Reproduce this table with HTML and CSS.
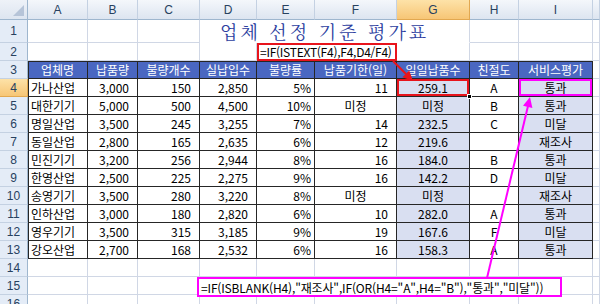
FILE: index.html
```html
<!DOCTYPE html>
<html lang="ko">
<head>
<meta charset="utf-8">
<title>업체 선정 기준 평가표</title>
<link rel="stylesheet" href="styles.css">
</head>
<body>
<div class="sheet">
  <div class="corner"><span class="tri"></span></div>
  <div class="ch">A</div><div class="ch">B</div><div class="ch">C</div><div class="ch">D</div><div class="ch">E</div><div class="ch">F</div><div class="ch sel">G</div><div class="ch">H</div><div class="ch">I</div><div class="ch"></div>

  <div class="rh">1</div><div class="c"></div><div class="c"></div><div class="c"></div><div class="c title">업체 선정 기준 평가표</div><div class="c"></div><div class="c"></div><div class="c"></div>

  <div class="rh">2</div><div class="c"></div><div class="c"></div><div class="c"></div><div class="c"></div><div class="c formula">=IF(ISTEXT(F4),F4,D4/F4)</div><div class="c"></div><div class="c"></div><div class="c"></div><div class="c"></div>

  <div class="rh">3</div><div class="c t hd a">업체명</div><div class="c t hd">납품량</div><div class="c t hd">불량개수</div><div class="c t hd">실납입수</div><div class="c t hd">불량률</div><div class="c t hd">납품기한(일)</div><div class="c t hd">일일납품수</div><div class="c t hd">친절도</div><div class="c t hd">서비스평가</div><div class="c"></div>

  <div class="rh sel">4</div><div class="c t a">가나산업</div><div class="c t r">3,000</div><div class="c t r">150</div><div class="c t r">2,850</div><div class="c t p">5%</div><div class="c t r">11</div><div class="c t m g redbox">259.1<span class="handle"></span></div><div class="c t m">A</div><div class="c t m g pinkbox">통과</div><div class="c"></div>

  <div class="rh">5</div><div class="c t a">대한기기</div><div class="c t r">5,000</div><div class="c t r">500</div><div class="c t r">4,500</div><div class="c t p">10%</div><div class="c t m">미정</div><div class="c t m g">미정</div><div class="c t m">B</div><div class="c t m g">통과</div><div class="c"></div>

  <div class="rh">6</div><div class="c t a">명일산업</div><div class="c t r">3,500</div><div class="c t r">245</div><div class="c t r">3,255</div><div class="c t p">7%</div><div class="c t r">14</div><div class="c t m g">232.5</div><div class="c t m">C</div><div class="c t m g">미달</div><div class="c"></div>

  <div class="rh">7</div><div class="c t a">동일산업</div><div class="c t r">2,800</div><div class="c t r">165</div><div class="c t r">2,635</div><div class="c t p">6%</div><div class="c t r">12</div><div class="c t m g">219.6</div><div class="c t m"></div><div class="c t m g">재조사</div><div class="c"></div>

  <div class="rh">8</div><div class="c t a">민진기기</div><div class="c t r">3,200</div><div class="c t r">256</div><div class="c t r">2,944</div><div class="c t p">8%</div><div class="c t r">16</div><div class="c t m g">184.0</div><div class="c t m">B</div><div class="c t m g">통과</div><div class="c"></div>

  <div class="rh">9</div><div class="c t a">한영산업</div><div class="c t r">2,500</div><div class="c t r">225</div><div class="c t r">2,275</div><div class="c t p">9%</div><div class="c t r">16</div><div class="c t m g">142.2</div><div class="c t m">D</div><div class="c t m g">미달</div><div class="c"></div>

  <div class="rh">10</div><div class="c t a">송영기기</div><div class="c t r">3,500</div><div class="c t r">280</div><div class="c t r">3,220</div><div class="c t p">8%</div><div class="c t m">미정</div><div class="c t m g">미정</div><div class="c t m"></div><div class="c t m g">재조사</div><div class="c"></div>

  <div class="rh">11</div><div class="c t a">인하산업</div><div class="c t r">3,000</div><div class="c t r">180</div><div class="c t r">2,820</div><div class="c t p">6%</div><div class="c t r">10</div><div class="c t m g">282.0</div><div class="c t m">A</div><div class="c t m g">통과</div><div class="c"></div>

  <div class="rh">12</div><div class="c t a">영우기기</div><div class="c t r">3,500</div><div class="c t r">315</div><div class="c t r">3,185</div><div class="c t p">9%</div><div class="c t r">19</div><div class="c t m g">167.6</div><div class="c t m">F</div><div class="c t m g">미달</div><div class="c"></div>

  <div class="rh">13</div><div class="c t a">강오산업</div><div class="c t r">2,700</div><div class="c t r">168</div><div class="c t r">2,532</div><div class="c t p">6%</div><div class="c t r">16</div><div class="c t m g">158.3</div><div class="c t m">A</div><div class="c t m g">통과</div><div class="c"></div>

  <div class="rh">14</div><div class="c"></div><div class="c"></div><div class="c"></div><div class="c"></div><div class="c"></div><div class="c"></div><div class="c"></div><div class="c"></div><div class="c"></div><div class="c"></div>
  <div class="rh">15</div><div class="c"></div><div class="c"></div><div class="c"></div><div class="c"></div><div class="c"></div><div class="c"></div><div class="c"></div><div class="c"></div><div class="c"></div><div class="c"></div>
  <div class="rh">16</div><div class="c"></div><div class="c"></div><div class="c"></div><div class="c"></div><div class="c"></div><div class="c"></div><div class="c"></div><div class="c"></div><div class="c"></div><div class="c"></div>

  <div class="note">=IF(ISBLANK(H4),"재조사",IF(OR(H4="A",H4="B"),"통과","미달"))</div>

  <svg class="arrows" width="600" height="304" viewBox="0 0 600 304">
    <line x1="393" y1="61" x2="406" y2="74" stroke="#e8141c" stroke-width="2"/>
    <polygon points="413,81 402.4,77.2 409.2,70.4" fill="#e8141c"/>
    <line x1="487" y1="278" x2="528" y2="106" stroke="#f0f" stroke-width="2"/>
    <polygon points="530,97 532.4,108 523,105.8" fill="#f0f"/>
  </svg>
</div>
</body>
</html>
```
FILE: styles.css
```css
html, body {
  margin: 0;
  padding: 0;
  background: #fff;
  overflow: hidden;
}

.sheet {
  position: relative;
  width: 600px;
  height: 304px;
  overflow: hidden;
  display: grid;
  grid-template-columns: 28px 60px 50px 62px 57px 58px 82px 73px 49px 74px 1fr;
  grid-template-rows: 20px 23px repeat(15, 18px);
  font-family: "Noto Sans CJK KR", "Noto Sans", sans-serif;
  font-size: 12px;
  color: #000;
}

.corner {
  position: relative;
  background: linear-gradient(#eef2f8, #dde5f0);
  border-right: 1px solid #9eb6ce;
  border-bottom: 1px solid #9eb6ce;
}

.tri {
  position: absolute;
  right: 3px;
  bottom: 3px;
  width: 0;
  height: 0;
  border-left: 11px solid transparent;
  border-bottom: 11px solid #b6c4d8;
}

.ch {
  box-sizing: border-box;
  background: linear-gradient(#f4f7fb, #dde5f0);
  border-right: 1px solid #c4d1e2;
  border-bottom: 1px solid #9eb6ce;
  display: flex;
  align-items: center;
  justify-content: center;
  color: #27415f;
  font-family: "Liberation Sans", sans-serif;
  font-size: 12px;
}

.rh {
  box-sizing: border-box;
  background: #e4ecf7;
  border-right: 1px solid #9eb6ce;
  border-bottom: 1px solid #c4d1e2;
  display: flex;
  align-items: center;
  justify-content: center;
  color: #27415f;
  font-family: "Liberation Sans", sans-serif;
  font-size: 12px;
}

.ch.sel, .rh.sel {
  background: linear-gradient(#fde2a8, #f7c676);
  border-color: #e2a850;
}

.c {
  box-sizing: border-box;
  border-right: 1px solid #d0d7e5;
  border-bottom: 1px solid #d0d7e5;
  display: flex;
  align-items: center;
  padding: 0 3px;
  white-space: nowrap;
  line-height: 1;
}

.title {
  grid-column: span 4;
  padding-left: 20px;
  font-family: "Noto Serif CJK KR", "Noto Sans CJK KR", serif;
  font-size: 18px;
  letter-spacing: 3px;
  color: #2c3ea0;
  border-bottom-color: #fff;
}

.formula {
  grid-column: span 2;
  border: 2px solid #e8141c;
  padding: 0 1px;
  font-size: 12px;
  letter-spacing: -0.25px;
}

.t {
  border-right-color: #262626;
  border-bottom-color: #262626;
}

.a {
  box-shadow: inset 1px 0 0 #262626;
  padding-left: 3px;
}

.hd {
  background: #4a67c1;
  color: #fff;
  justify-content: center;
  box-shadow: inset 0 1px 0 #262626;
  padding: 0 2px;
}

.hd.a {
  box-shadow: inset 1px 1px 0 #262626;
}

.r { justify-content: flex-end; padding-right: 8px; }
.p { justify-content: flex-end; padding-right: 3px; }
.m { justify-content: center; }

.g { background: #d9dff1; }

.redbox {
  position: relative;
  box-shadow: inset 0 0 0 2px #e8141c;
}

.handle {
  position: absolute;
  right: -3px;
  bottom: -3px;
  width: 5px;
  height: 5px;
  background: #000;
  border: 1px solid #fff;
  box-sizing: border-box;
}

.pinkbox {
  box-shadow: inset 0 0 0 2px #f0f;
}

.note {
  position: absolute;
  left: 197px;
  top: 277px;
  width: 365px;
  height: 20px;
  box-sizing: border-box;
  border: 2px solid #f0f;
  background: #fff;
  padding: 0 2px;
  display: flex;
  align-items: center;
  white-space: nowrap;
  font-size: 12px;
  letter-spacing: -0.15px;
}

.arrows {
  position: absolute;
  left: 0;
  top: 0;
  pointer-events: none;
}
```
